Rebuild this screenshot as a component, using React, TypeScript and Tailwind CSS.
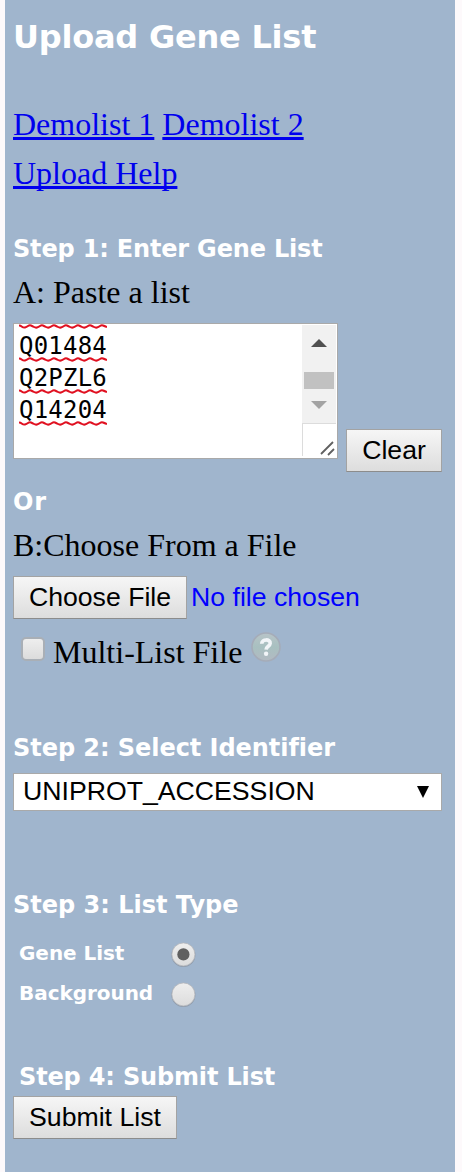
import React from 'react';

const BUTTON =
  'block h-[43px] shrink-0 border border-[#a3a3a3] border-b-[#8c8c8c] bg-linear-to-b from-[#f6f6f6] to-[#dddddd] text-center font-["Liberation_Sans",Arial,sans-serif] text-[26.67px] leading-[39px] whitespace-nowrap text-black';
const STEP =
  'h-[28px] font-["DejaVu_Sans",Verdana,sans-serif] text-[24px] leading-[30px] font-bold whitespace-nowrap text-white [font-variant-ligatures:none]';
const SERIF = 'h-[44px] text-[32px] leading-[44px] whitespace-nowrap';
const LINK = 'block underline decoration-[2.5px] underline-offset-[2px] [text-decoration-skip-ink:none]';

function Squiggle() {
  return (
    <svg className="relative block h-[5px] w-[88px]" viewBox="0 0 88 5" fill="none">
      <path
        d="M0 1.5 Q1.5 1.5 3 2.7 T6 3.5 T9 2 T12 1.5 T15 3 T18 3.5 T21 2 T24 1.5 T27 3 T30 3.5 T33 2 T36 1.5 T39 3 T42 3.5 T45 2 T48 1.5 T51 3 T54 3.5 T57 2 T60 1.5 T63 3 T66 3.5 T69 2 T72 1.5 T75 3 T78 3.5 T81 2 T84 1.5 T88 3"
        stroke="#e01020"
        strokeWidth="2"
      />
    </svg>
  );
}

function Accession({ value }: { value: string }) {
  return (
    <div className="h-[32px]">
      <div className="h-[27px] text-[24px] leading-[32px] tracking-[0.22px]">{value}</div>
      <Squiggle />
    </div>
  );
}

function GeneTextArea() {
  return (
    <div className="flex h-[136px] w-[325px] border border-[#a9a9a9] bg-white">
      <div className="flex-1 overflow-hidden pl-[5px] font-['DejaVu_Sans_Mono',monospace] text-black">
        <Squiggle />
        <div className="pt-[1px]">
          <Accession value="Q01484" />
          <Accession value="Q2PZL6" />
          <Accession value="Q14204" />
        </div>
      </div>
      <svg className="block h-[134px] w-[35px]" viewBox="0 0 35 134">
        <rect x="0" y="1" width="34" height="98" fill="#f1f1f1" />
        <path d="M9 23 L17 15 L25 23Z" fill="#505050" />
        <rect x="2" y="48" width="30" height="17" fill="#c1c1c1" />
        <path d="M9 77 L25 77 L17 85Z" fill="#a3a3a3" />
        <path d="M0 99.5 H34 M.5 99 V132" stroke="#dcdcdc" fill="none" />
        <path d="M19 130 L31 118 M26 131 L32 125" stroke="#606060" strokeWidth="1.8" />
      </svg>
    </div>
  );
}

function HelpIcon() {
  return (
    <svg className="mt-[1px] ml-[8px] block size-[32px]" viewBox="0 0 32 32">
      <defs>
        <linearGradient id="help" x1="0" y1="0" x2="0" y2="1">
          <stop offset="0" stopColor="#b8c4c8" />
          <stop offset="0.5" stopColor="#a8c0c0" />
          <stop offset="1" stopColor="#b2bac2" />
        </linearGradient>
      </defs>
      <circle cx="16" cy="16" r="14" fill="url(#help)" stroke="#a5acb8" strokeWidth="1.6" />
      <path
        d="M11.7 12.8 C11.7 7.6 20.6 7.8 20.2 12.4 C20 15.2 16.2 15.4 16.1 18.6"
        fill="none"
        stroke="#f2f5f8"
        strokeWidth="3.6"
      />
      <circle cx="16.1" cy="22.8" r="2.2" fill="#f2f5f8" />
    </svg>
  );
}

function Radio({ checked = false }: { checked?: boolean }) {
  return (
    <svg className="block size-[26px]" viewBox="0 0 26 26">
      <defs>
        <linearGradient id="radio" x1="0" y1="0" x2="0" y2="1">
          <stop offset="0" stopColor="#eeeeee" />
          <stop offset="1" stopColor="#dcdcdc" />
        </linearGradient>
      </defs>
      <circle cx="13.4" cy="14" r="12" fill="#8f9baa" />
      <circle cx="13.4" cy="13.4" r="11.5" fill="url(#radio)" stroke="#b5b8bc" strokeWidth="0.8" />
      {checked && <circle cx="13.4" cy="13.4" r="6.1" fill="#606060" />}
    </svg>
  );
}

function RadioRow({ label, checked }: { label: string; checked?: boolean }) {
  return (
    <div className="flex h-[40px] pl-[6px]">
      <div className="h-[24px] w-[151px] font-['DejaVu_Sans',Verdana,sans-serif] text-[20px] leading-[24px] font-bold tracking-[-0.05px] whitespace-nowrap text-white">
        {label}
      </div>
      <Radio checked={checked} />
    </div>
  );
}

export default function App() {
  return (
    <div className="h-[1172px] w-[462px] bg-[#fdf9fb] pl-[5px]">
      <div className="h-[1172px] w-[450px] bg-[#a0b5cd] pl-[8px] font-['Liberation_Serif','Times_New_Roman',serif] text-black">
        <h1 className="h-[74px] font-['DejaVu_Sans',Verdana,sans-serif] text-[32px] leading-[74px] font-bold tracking-[-0.22px] whitespace-nowrap text-white">
          Upload Gene List
        </h1>
        <div className="pt-[26px] text-[32px] leading-[49px] text-[#0000ee]">
          <div className="flex gap-[8px]">
            <a className={LINK} href="#demo1">Demolist 1</a>
            <a className={LINK} href="#demo2">Demolist 2</a>
          </div>
          <a className={LINK} href="#help">Upload Help</a>
        </div>

        <h2 className={`${STEP} mt-[36px] tracking-[-0.18px]`}>Step 1: Enter Gene List</h2>
        <div className={`${SERIF} mt-[8px]`}>A: Paste a list</div>
        <div className="mt-[9px] flex h-[149px] gap-[8px]">
          <GeneTextArea />
          <button className={`${BUTTON} mt-[106px] w-[96px]`}>Clear</button>
        </div>

        <h2 className={`${STEP} mt-[15px] tracking-[0.8px]`}>Or</h2>
        <div className={`${SERIF} mt-[8px]`}>B:Choose From a File</div>
        <div className="mt-[9px] flex h-[43px] gap-[4px]">
          <button className={`${BUTTON} w-[174px]`}>Choose File</button>
          <span className="font-['Liberation_Sans',Arial,sans-serif] text-[26.67px] leading-[42px] whitespace-nowrap text-[#0000ff]">
            No file chosen
          </span>
        </div>
        <div className="mt-[11px] flex h-[44px] pl-[8px]">
          <div className="mt-[7px] mr-[8px] size-[24px] rounded-[5px] border-2 border-[#a9afb6] bg-linear-to-b from-[#eeeeee] to-[#dcdcdc]" />
          <span className={SERIF}>Multi-List File</span>
          <HelpIcon />
        </div>

        <h2 className={`${STEP} mt-[59px] tracking-[-0.05px]`}>Step 2: Select Identifier</h2>
        <div className="mt-[12px] flex h-[38px] w-[429px] items-center justify-between border border-[#a9a9a9] bg-white pr-[12px] pl-[9px] font-['Liberation_Sans',Arial,sans-serif] text-[26.67px] leading-[34px] text-black">
          <span className="h-[36px]">UNIPROT_ACCESSION</span>
          <svg className="block h-[12px] w-[12px]" viewBox="0 0 12 12">
            <path d="M0 0 H12 L6 12Z" fill="#000" />
          </svg>
        </div>

        <h2 className={`${STEP} mt-[79px]`}>Step 3: List Type</h2>
        <div className="mt-[23px]">
          <RadioRow label="Gene List" checked />
          <RadioRow label="Background" />
        </div>

        <h2 className={`${STEP} mt-[41px] pl-[6px] tracking-[-0.16px]`}>Step 4: Submit List</h2>
        <button className={`${BUTTON} mt-[6px] w-[164px]`}>Submit List</button>
      </div>
    </div>
  );
}
